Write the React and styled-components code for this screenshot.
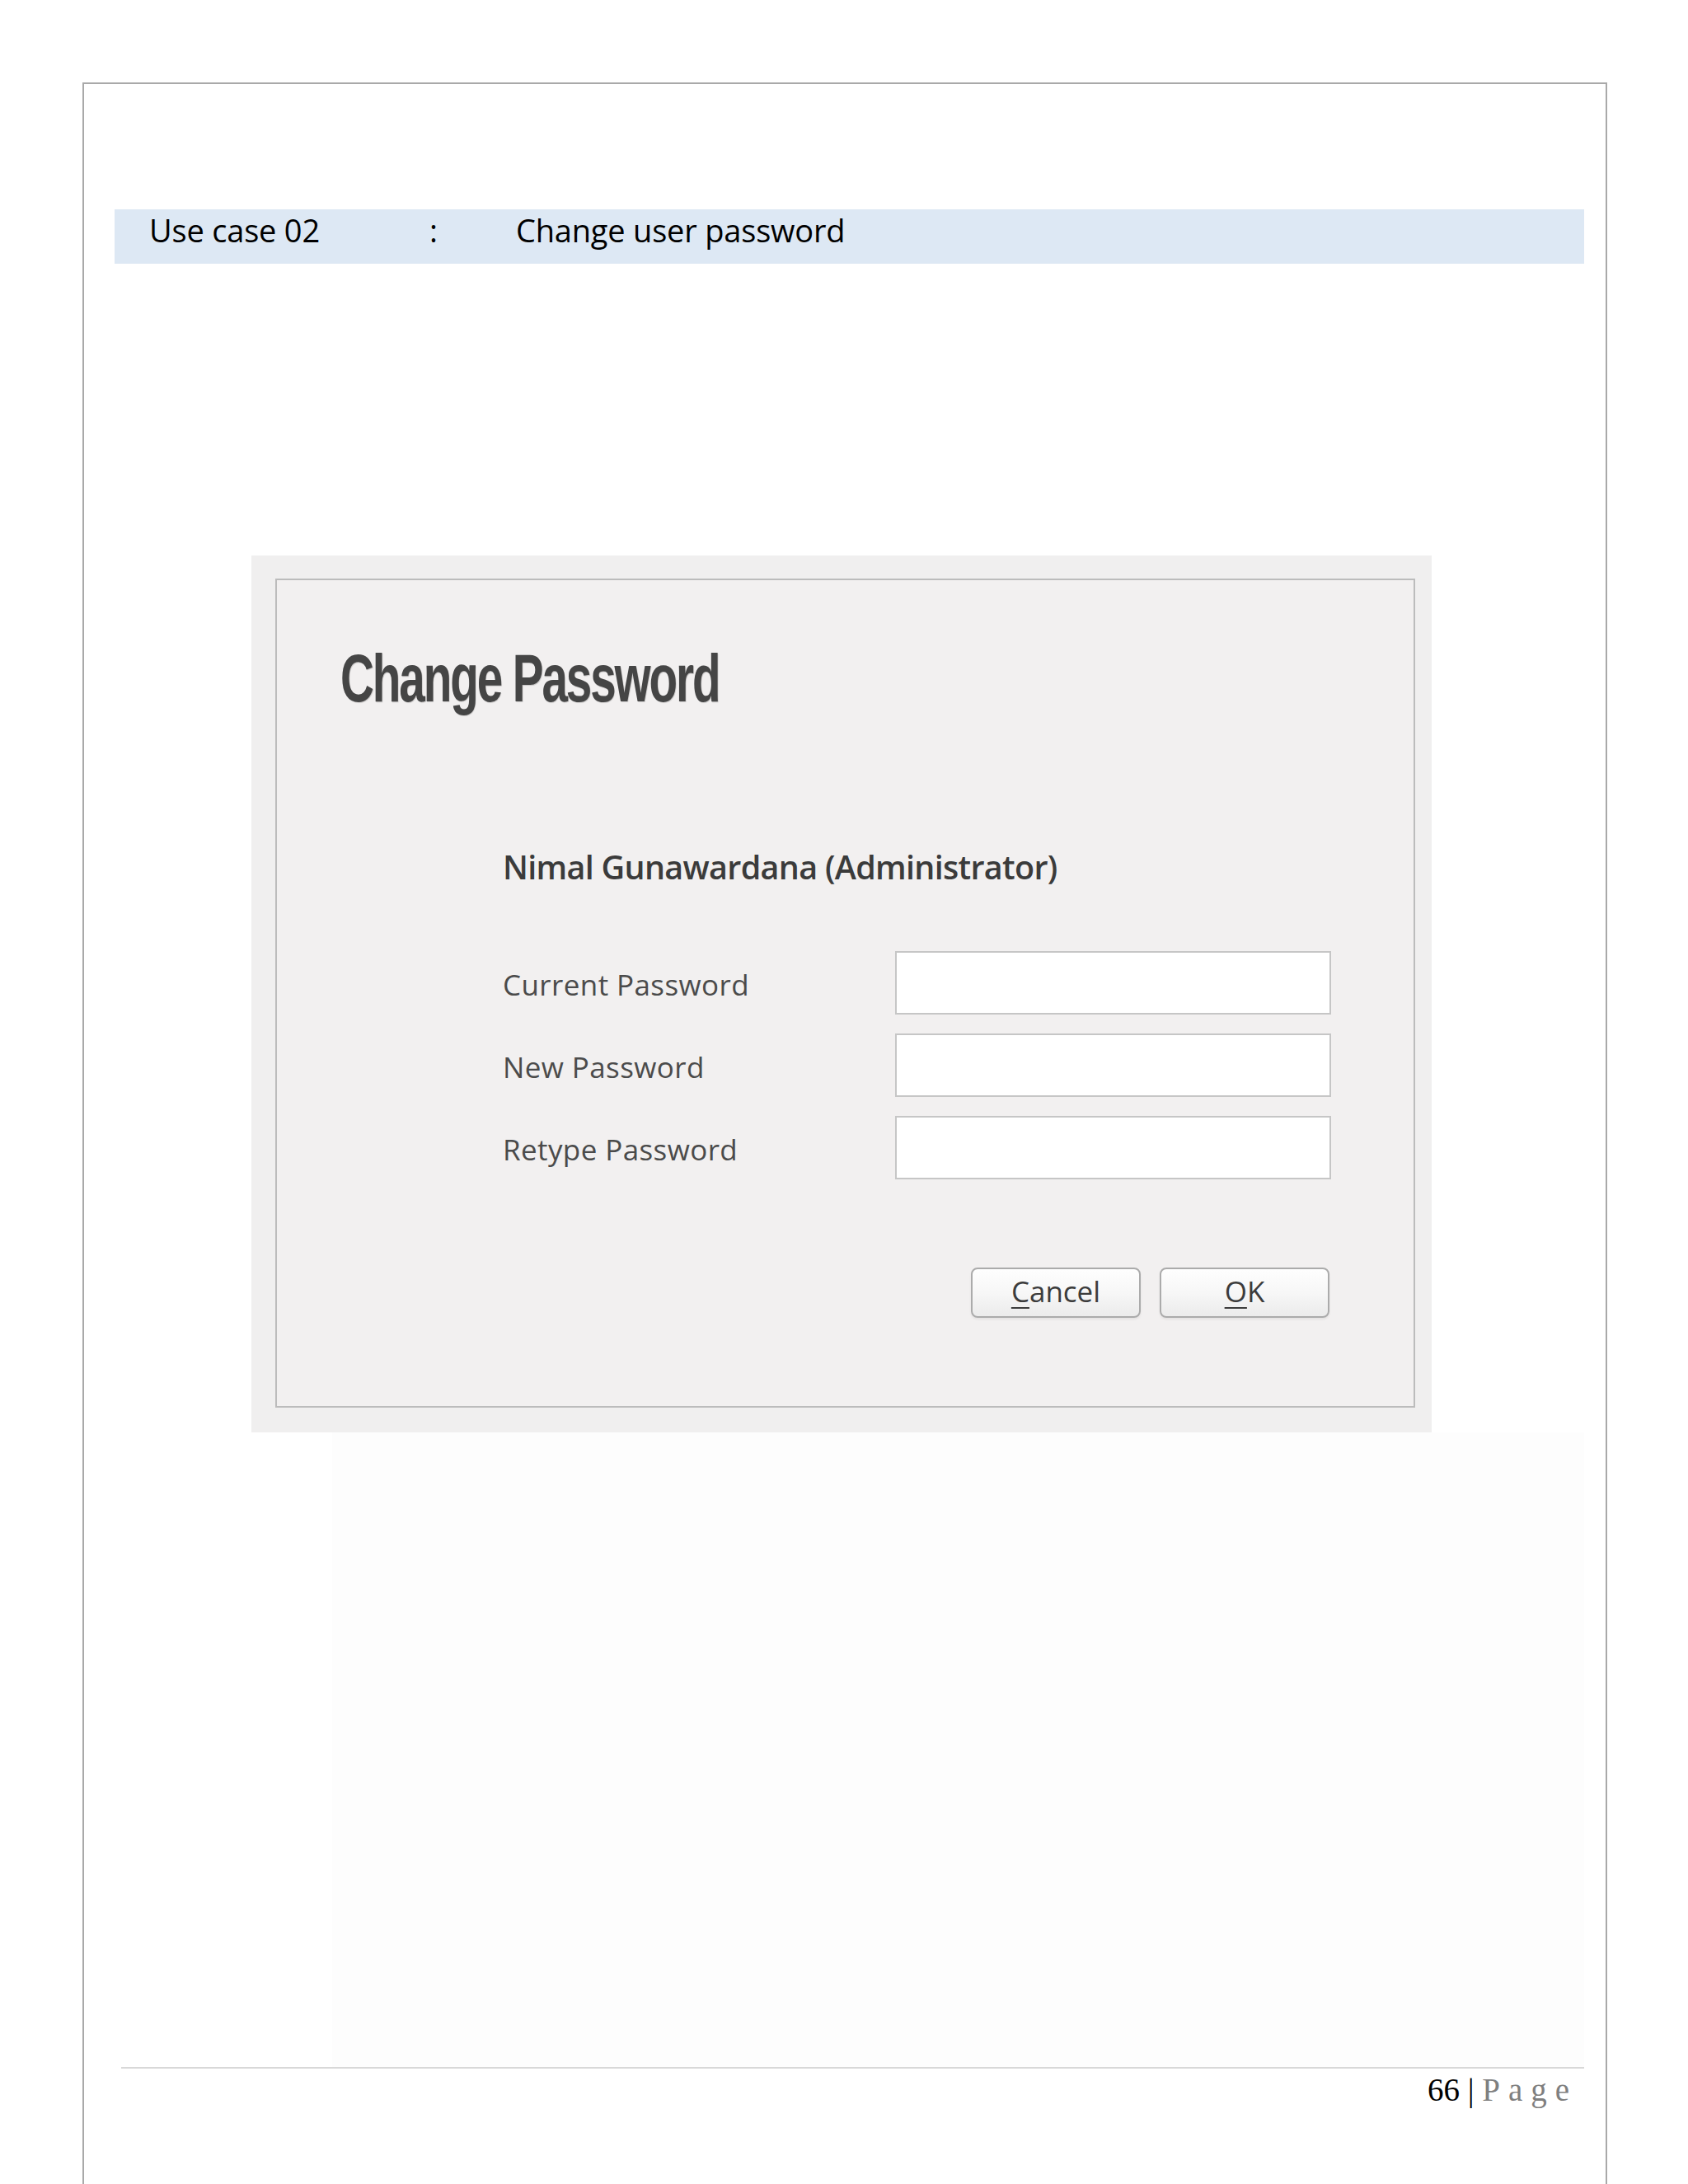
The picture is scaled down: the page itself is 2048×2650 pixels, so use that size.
import React from 'react'
import styled, {createGlobalStyle} from 'styled-components'

const GlobalStyle = createGlobalStyle`
    html, body {
        margin: 0;
        padding: 0;
        background: #ffffff;
    }
    body {
        font-family: "Open Sans", "Noto Sans", sans-serif;
        color: #000;
    }
`

const Page = styled.div`
    box-sizing: border-box;
    width: 1850px;
    min-height: 2550px;
    margin: 100px 0 0 100px;
    border: 2px solid #a9a9a9;
    border-bottom: none;
    display: flex;
    flex-direction: column;
`

const CaseBand = styled.div`
    box-sizing: border-box;
    height: 66px;
    margin: 152px 26px 0 37px;
    padding: 6px 0 0 42px;
    background: #dde8f4;
    display: grid;
    grid-template-columns: 340px 105px 1fr;
    font-size: 38px;
    line-height: 38px;
    letter-spacing: -0.2px;
`

const Dialog = styled.div`
    box-sizing: border-box;
    width: 1432px;
    height: 1064px;
    margin: 354px 0 0 203px;
    padding: 28px 20px 30px 29px;
    background: #f0efef;
`

const DialogInner = styled.div`
    box-sizing: border-box;
    height: 100%;
    border: 2px solid #bcbcbc;
    background: #f2f0f0;
    display: flex;
    flex-direction: column;
`

// no condensed face installed, so the title is narrowed by hand
const Title = styled.h1`
    margin: 78px 0 0 77px;
    font-family: "Liberation Sans", Arial, sans-serif;
    font-weight: 700;
    font-size: 82px;
    line-height: 82px;
    letter-spacing: -3px;
    color: #454545;
    text-shadow: 1px 1px 1px rgba(0, 0, 0, 0.18);
    transform: scaleX(0.69);
    transform-origin: left center;
    white-space: nowrap;
`

const Body = styled.div`
    margin-left: 274px;
    width: 1007px;
    display: flex;
    flex-direction: column;
`

const UserName = styled.div`
    margin-top: 168px;
    font-weight: 600;
    font-size: 39.5px;
    line-height: 40px;
    letter-spacing: -0.7px;
    color: #3b3b3b;
`

const Form = styled.div`
    margin-top: 82px;
    display: flex;
    flex-direction: column;
    gap: 23px;
`

const Row = styled.div`
    display: grid;
    grid-template-columns: 476px 529px;
    align-items: center;
`

const Label = styled.label`
    font-size: 35px;
    letter-spacing: 0.4px;
    color: #4b4b4b;
    padding-top: 4px;
`

const Field = styled.input`
    box-sizing: border-box;
    height: 77px;
    width: 529px;
    border: 2px solid #c6c6c6;
    background: #ffffff;
    outline: none;
`

const Buttons = styled.div`
    margin: 107px 4px 0 0;
    display: flex;
    justify-content: flex-end;
    gap: 23px;
`

const Button = styled.button`
    box-sizing: border-box;
    width: 206px;
    height: 61px;
    border: 2px solid #ababab;
    border-radius: 8px;
    background: linear-gradient(#fefefe 0%, #f7f7f7 50%, #ebebeb 100%);
    box-shadow: 0 2px 3px rgba(0, 0, 0, 0.06);
    font-family: "Open Sans", "Noto Sans", sans-serif;
    font-size: 35px;
    line-height: 1;
    color: #3c3c3c;
    padding: 0 0 4px;
`

const Key = styled.span`
    text-decoration: underline;
    text-decoration-thickness: 2px;
    text-underline-offset: 6px;
`

const Blank = styled.div`
    height: 770px;
    margin: 0 26px 0 301px;
    background: #fdfdfd;
`

const FooterLine = styled.div`
    height: 2px;
    margin: 0 26px 0 45px;
    background: #d8d8d8;
`

const Footer = styled.div`
    margin: 6px 44px 0 0;
    text-align: right;
    font-family: "Liberation Serif", "Times New Roman", serif;
    font-size: 39px;
    line-height: 39px;
    color: #000;
`

const PageWord = styled.span`
    color: #7f7f7f;
    letter-spacing: 10px;
    margin-right: -10px;
`

const fields = ['Current Password', 'New Password', 'Retype Password']

export default function App() {
    return (
        <>
            <GlobalStyle/>
            <Page>
                <CaseBand>
                    <span>Use case 02</span>
                    <span>:</span>
                    <span>Change user password</span>
                </CaseBand>

                <Dialog>
                    <DialogInner>
                        <Title>Change Password</Title>
                        <Body>
                            <UserName>Nimal Gunawardana (Administrator)</UserName>
                            <Form>
                                {fields.map(label => (
                                    <Row key={label}>
                                        <Label>{label}</Label>
                                        <Field type="password"/>
                                    </Row>
                                ))}
                            </Form>
                            <Buttons>
                                <Button type="button"><Key>C</Key>ancel</Button>
                                <Button type="button"><Key>O</Key>K</Button>
                            </Buttons>
                        </Body>
                    </DialogInner>
                </Dialog>

                <Blank/>
                <FooterLine/>
                <Footer>
                    66 | <PageWord>Page</PageWord>
                </Footer>
            </Page>
        </>
    )
}
